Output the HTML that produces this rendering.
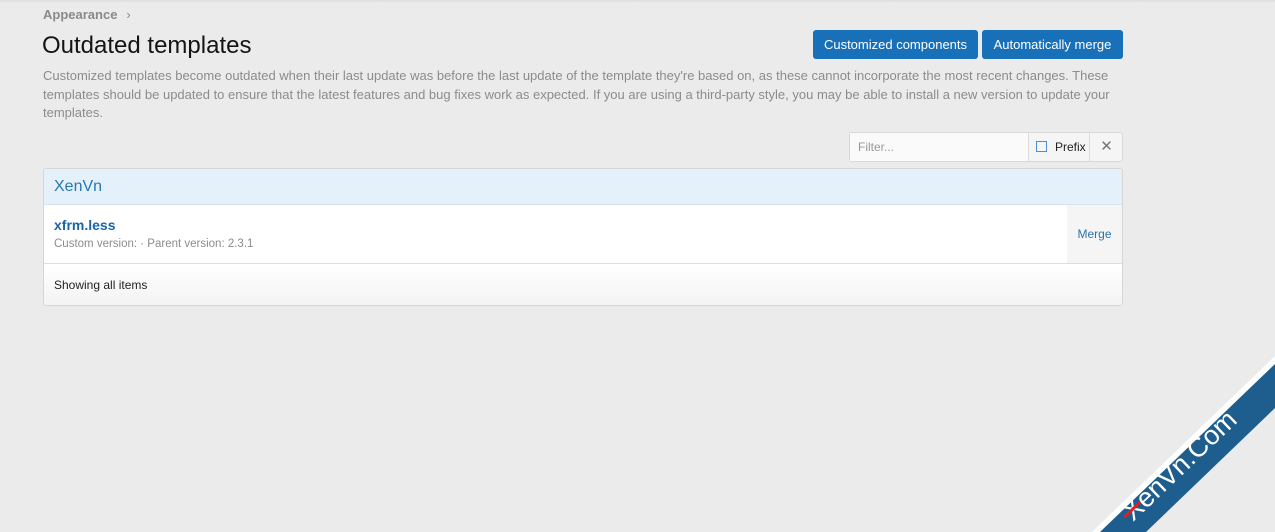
<!DOCTYPE html>
<html><head><style>
body{margin:0;width:1275px;height:532px;background:#ebebeb;font-family:"Liberation Sans",sans-serif;position:relative;overflow:hidden}
.top{position:absolute;left:0;top:0;width:1275px;height:3px;background:linear-gradient(#ddd,#ebebeb)}
.bc{position:absolute;left:43px;top:7px;font-size:13px;font-weight:bold;color:#8a8a8a}
.bc span{font-weight:normal;margin-left:9px}
h1{position:absolute;left:42px;top:32px;margin:0;font-size:24px;font-weight:normal;color:#141414}
.btn{position:absolute;top:30px;height:29px;background:#1770b8;color:#fff;font-size:13px;line-height:29px;text-align:center;border-radius:3px}
.desc{position:absolute;left:43px;top:67px;width:1080px;font-size:13px;line-height:18.5px;color:#8c8c8c}
.filter{position:absolute;left:849px;top:132px;width:272px;height:28px;border:1px solid #d8d8d8;border-radius:3px;background:#f5f5f5;font-size:12px}
.filter .in{position:absolute;left:0;top:0;width:179px;height:28px;background:#fafafa;border-right:1px solid #ddd;color:#999;line-height:28px;padding-left:8px;box-sizing:border-box}
.filter .pf{position:absolute;left:186px;top:0;line-height:28px;color:#222}
.filter .pf i{display:inline-block;width:9px;height:9px;border:1px solid #4a8fd0;margin-right:8px;vertical-align:-1px}
.filter .x{position:absolute;left:239px;top:0;width:33px;height:28px;border-left:1px solid #ddd;text-align:center;line-height:28px;color:#777;font-size:15px}
.box{position:absolute;left:43px;top:168px;width:1078px;height:136px;border:1px solid #d6d6d6;border-radius:3px;background:#fff;overflow:hidden}
.hd{height:35px;background:#e5f1fa;border-bottom:1px solid #d8e3ec;color:#2577b1;font-size:16px;line-height:35px;padding-left:10px}
.row{position:relative;height:58px;border-bottom:1px solid #ddd}
.row b{position:absolute;left:10px;top:12px;color:#1766a8;font-size:14px}
.row small{position:absolute;left:10px;top:33px;font-size:11.5px;color:#8c8c8c}
.row .m{position:absolute;right:0;top:0;width:55px;height:58px;background:#f5f5f5;color:#2b73ad;font-size:12px;line-height:58px;text-align:center}
.ft{height:41px;background:linear-gradient(#fff,#f3f3f3);font-size:12px;line-height:42px;padding-left:10px;color:#222}
</style></head><body>
<div class="top"></div>
<div class="bc">Appearance<span>›</span></div>
<h1>Outdated templates</h1>
<div class="btn" style="left:813px;width:165px">Customized components</div>
<div class="btn" style="left:982px;width:141px">Automatically merge</div>
<div class="desc">Customized templates become outdated when their last update was before the last update of the template they're based on, as these cannot incorporate the most recent changes. These templates should be updated to ensure that the latest features and bug fixes work as expected. If you are using a third-party style, you may be able to install a new version to update your templates.</div>
<div class="filter"><div class="in">Filter...</div><div class="pf"><i></i>Prefix</div><div class="x">✕</div></div>
<div class="box">
<div class="hd">XenVn</div>
<div class="row"><b>xfrm.less</b><small>Custom version: · Parent version: 2.3.1</small><div class="m">Merge</div></div>
<div class="ft">Showing all items</div>
</div>
<svg style="position:absolute;left:0;top:0" width="1275" height="532">
<polygon points="1092,532 1275,356 1275,364 1100,532" fill="#fff"/>
<polygon points="1100,532 1275,364 1275,408 1146,532" fill="#1d5e8f"/>
<g transform="translate(1133,522) rotate(-43.6)">
<text x="0" y="0" font-family="Liberation Sans,sans-serif" font-size="27" fill="#fff">XenVn.Com</text>
<rect x="-3" y="-11" width="22" height="3" fill="#e02020"/>
</g>
</svg>
</body></html>
